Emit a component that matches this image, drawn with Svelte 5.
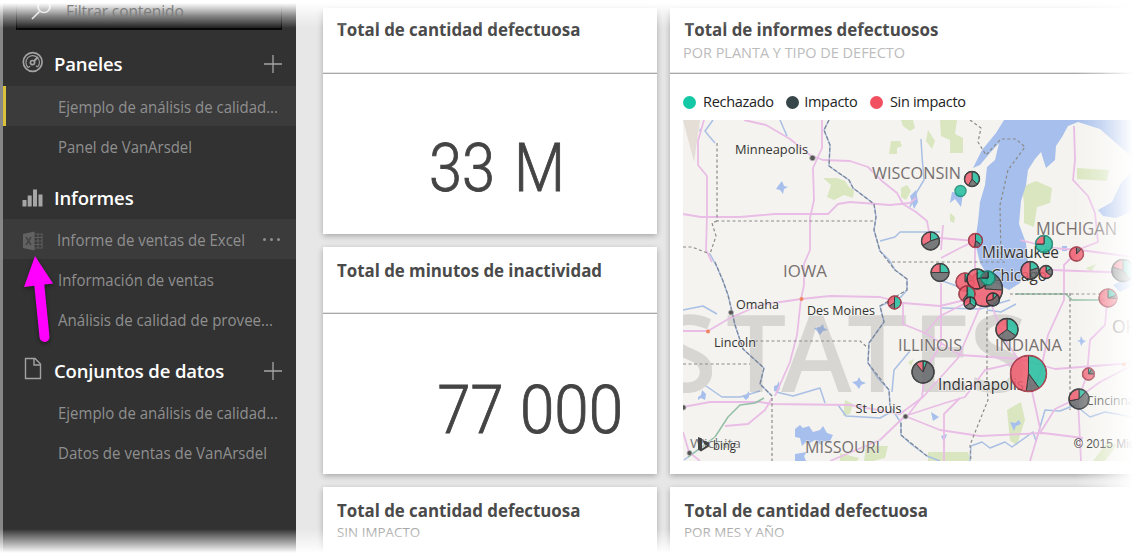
<script>
  const sections = [
    {
      title: 'Paneles', icon: 'gauge', add: true, first: true,
      items: [
        { text: 'Ejemplo de análisis de calidad...', selected: true, w: 220 },
        { text: 'Panel de VanArsdel', w: 134 }
      ]
    },
    {
      title: 'Informes', icon: 'bars',
      items: [
        { text: 'Informe de ventas de Excel', excel: true, w: 188 },
        { text: 'Información de ventas', w: 156 },
        { text: 'Análisis de calidad de provee...', w: 215 }
      ]
    },
    {
      title: 'Conjuntos de datos', icon: 'file', add: true,
      items: [
        { text: 'Ejemplo de análisis de calidad...', w: 220 },
        { text: 'Datos de ventas de VanArsdel', w: 209 }
      ]
    }
  ];

  const legend = [
    { text: 'Rechazado', color: '#12c8a5' },
    { text: 'Impacto', color: '#374649' },
    { text: 'Sin impacto', color: '#f15060' }
  ];

  // x, y, radius, rejected share, impact share (the rest is no impact)
  const pies = [
    [972, 179, 7.5, 0.38, 0.2], [960.5, 191, 5.5, 1, 0],
    [930.5, 241, 9, 0.2, 0.47], [975.5, 240.5, 7, 0.36, 0.16],
    [940, 272.5, 9, 0.25, 0.5], [985, 289, 17.5, 0.04, 0.22],
    [965, 282, 9, 0.1, 0.12], [977, 279, 10, 0.2, 0.25],
    [988, 278, 7, 0.75, 0.25], [967, 294, 8, 0.5, 0.1],
    [970, 303, 6, 0.35, 0.3], [993, 299.5, 6.5, 0.12, 0.6],
    [1007, 329.5, 11, 0.35, 0.3], [1028.5, 373.5, 18, 0.4, 0.12],
    [923, 372, 11, 0.06, 0.83], [894.5, 302.5, 6.5, 0.5, 0.15],
    [1044, 244, 8.5, 0.75, 0], [1030, 270.5, 9, 0.2, 0.3],
    [1046, 272, 6.5, 0.15, 0.2], [1076.5, 254, 7, 0, 0.12],
    [1123, 270.5, 11, 0.4, 0.4], [1108, 298, 9, 0.2, 0.06],
    [1088.5, 374, 6, 0.1, 0.15], [1079, 399, 10, 0.12, 0.6]
  ];

  const colors = ['#27bfa0', '#66696b', '#f05f70'];

  function slices([x, y, r, a, b]) {
    const shares = [a, b, Math.max(0, 1 - a - b)];
    let t = 0;
    return shares.map((s, i) => {
      const t0 = t * 2 * Math.PI;
      t += s;
      const e = t * 2 * Math.PI;
      const p = (k) => `${x + r * Math.sin(k)} ${y - r * Math.cos(k)}`;
      return { s, color: colors[i], d: `M${x} ${y}L${p(t0)}A${r} ${r} 0 ${s > 0.5 ? 1 : 0} 1 ${p(e)}Z` };
    }).filter((o) => o.s > 0 && o.s < 1);
  }

  const roads = [
    'M704 120L698 141V165L707 176V215L706 250L712 262',
    'M683 214L701 217H740L775 214L828 214L838 204L850 202L890 205L910 203L916 198',
    'M822 120V148L813 168L814 200L810 218L810 250L804 264L804 285L801 299L797 335L790 362L775 396',
    'M744 120L766 125L790 139L810 155L823 160L850 161L868 167L882 181L897 193L903 204L916 212L927 221L930 237L952 239L976 241',
    'M683 331H708L730 318L760 305L801 299L830 296L880 297L903 303L940 306L965 300L985 294',
    'M683 407L710 402H760L772 404L850 405L900 414L923 397L958 358L983 300',
    'M725 426L748 424L765 410L772 398', 'M683 432L689 452L700 461',
    'M830 461L880 440L905 416L945 403L965 397L985 370L1028 360',
    'M905 416L940 430L980 436L1043 433L1083 438', 'M903 303V324L925 333L960 355L1020 359L1055 369L1133 363',
    'M925 333L940 316L980 296', 'M941 250L943 225', 'M941 258L960 248L975 241V280',
    'M941 283V345L925 370L922 397L908 415', 'M988 296L1005 340L1028 373L1040 428L1030 461',
    'M1074 126L1075 160L1073 180L1088 196L1095 213L1098 242L1080 249L1064 265V300L1048 335L1040 375L1033 387',
    'M1020 240L1052 248L1080 250L1133 257', 'M1052 270L1133 273', 'M1108 292L1105 325L1090 340L1087 375L1078 400L1081 461',
    'M1040 433L1055 409L1078 398L1100 382L1133 365', 'M944 461V414L960 398'
  ];

  const rivers = [
    'M713 120L705 131L709 136L715 143', 'M829 120L824 130L830 145L829 166L840 174L849 180L853 188L865 197L874 204L876 217L874 230L880 251L889 260L895 270L907 279V290L901 297L880 306L884 322L869 343L868 363L878 378L889 390L890 406L901 423L901 435L911 444L927 456L940 461',
    'M710 254L717 267L723 281L728 295L731 307L735 325L743 349L764 368L760 384L772 396',
    'M880 241L895 237L900 232L940 232', 'M683 310L703 306L717 314', 'M706 386L722 397H740L760 391',
    'M776 392L793 396L820 388L825 403', 'M838 405L846 416L880 418L891 412', 'M910 351L894 370L892 392',
    'M921 139L922 156L924 180L915 195L910 207', 'M970 461L971 446L982 442L990 448L1005 442L1012 447L1033 432L1036 441L1045 410L1060 411L1075 405L1090 417L1105 412L1133 417',
    'M780 120L787 136', 'M987 310L1001 312L1016 304', 'M942 308L980 309L1010 300', 'M940 280L965 289', 'M684 460L712 440'
  ];

  const dashes = [
    'M717 143V221H875', 'M717 221L712 223L716 236L710 254', 'M683 247H692L710 254',
    'M683 364H750', 'M755 341H860L868 348', 'M772 398V461', 'M892 262H1005', 'M987 300V388L988 400L970 445L971 461',
    'M1070 293V410', 'M1010 294H1100', 'M970 120L981 128L978 142L986 155L1001 139H1016L1025 147L1008 170L1000 205L1001 260'
  ];

  // text, x, y, font size, width, kind
  const labels = [
    ['Minneapolis', 735, 154, 13.5, 73, 'city'], ['Omaha', 736, 308.5, 13.5, 43, 'city'],
    ['Des Moines', 807, 315, 13.5, 68, 'city'], ['Lincoln', 714, 347, 13.5, 42, 'city'],
    ['St Louis', 855.5, 413, 13.5, 46, 'city'], ['Milwaukee', 982, 258, 16, 77, 'city'],
    ['Chicago', 991, 280.5, 16, 56, 'city'], ['Indianapolis', 938, 390, 15.5, 86, 'city'],
    ['Cincinnati', 1086, 405, 13.5, 56, 'city'], ['WISCONSIN', 872, 178.5, 17, 89, 'state'],
    ['MICHIGAN', 1036, 234.5, 17.5, 81, 'state'], ['IOWA', 783, 277, 17, 44, 'state'],
    ['ILLINOIS', 898, 351, 16.5, 64, 'state'], ['INDIANA', 995, 351, 16.5, 67, 'state'],
    ['MISSOURI', 805, 453, 16.5, 75, 'state'], ['OHIO', 1112, 333, 17.5, 45, 'state']
  ];
</script>

<main class="page">
  <aside class="sidebar">
    <div class="search">
      <svg class="lens" viewBox="0 0 24 24"><circle cx="15" cy="8.5" r="6" /><path d="M10.5 13.5L3 21" /></svg>
      <span>Filtrar contenido</span>
    </div>
    {#each sections as s}
      <section>
        <header class:first={s.first}>
          {#if s.icon === 'gauge'}
            <svg class="icon gauge" viewBox="0 0 22 24">
              <circle cx="10.7" cy="12" r="9.4" />
              <path class="thin" d="M6.200 17.500A6.800 6.800 0 1 1 15.700 17M6.200 17.500l2-1.400M15.700 17l-1.800-1.300" />
              <circle cx="10.500" cy="12.600" r="2.100" /><path class="needle" d="M11.700 11.500L16 7" />
            </svg>
          {:else if s.icon === 'bars'}
            <svg class="icon bars" viewBox="0 0 22 24"><path d="M.5 14h4v6.500h-4zM5.700 9.500h4v11h-4zM11 3.500h4v17h-4zM16.500 8.500h4v12h-4z" /></svg>
          {:else}
            <svg class="icon file" viewBox="0 0 22 24"><path d="M3.500 1.500h9.500l5.500 5.500v14.500h-15zM12 1.500v6.500h6.500" /></svg>
          {/if}
          <h2>{s.title}</h2>
          {#if s.add}<svg class="plus" viewBox="0 0 18 18"><path d="M9 0v18M0 9h18" /></svg>{/if}
        </header>
        {#each s.items as it}
          <div class="item" class:selected={it.selected} class:hover={it.excel}>
            {#if it.excel}
              <svg class="excel" viewBox="0 0 20 20">
                <path class="sheet" d="M11 3h8v14h-8M11 6.500h8M11 10h8M11 13.500h8M15 3v14" />
                <path class="book" d="M0 3L11.500 .5v19L0 17z" /><path class="mark" d="M3 6l5 8M8 6l-5 8" />
              </svg>
            {/if}
            <svg class="label" style="width:{it.w}px" height="24"><text x="0" y="19" textLength={it.w} lengthAdjust="spacingAndGlyphs">{it.text}</text></svg>
            {#if it.excel}<span class="dots"><i></i><i></i><i></i></span>{/if}
          </div>
        {/each}
      </section>
    {/each}
  </aside>

  <div class="board">
    <div class="column">
      <article class="card small one">
        <div class="head"><h3>Total de cantidad defectuosa</h3></div>
        <svg class="figure" viewBox="323 74 334 160"><text y="191"><tspan x="429" textLength="66" lengthAdjust="spacingAndGlyphs">33</tspan> <tspan x="514" textLength="51" lengthAdjust="spacingAndGlyphs">M</tspan></text></svg>
      </article>
      <article class="card small two">
        <div class="head"><h3>Total de minutos de inactividad</h3></div>
        <svg class="figure" viewBox="323 314 334 160"><text y="433"><tspan x="437.500" textLength="66" lengthAdjust="spacingAndGlyphs">77</tspan> <tspan x="520" textLength="103" lengthAdjust="spacingAndGlyphs">000</tspan></text></svg>
      </article>
      <article class="card last"><div class="head"><h3>Total de cantidad defectuosa</h3><p class="lite">SIN IMPACTO</p></div></article>
    </div>
    <div class="column wide">
      <article class="card tall">
        <div class="head"><h3>Total de informes defectuosos</h3><p>POR PLANTA Y TIPO DE DEFECTO</p></div>
        <div class="legend">
          {#each legend as l}<span><i style="background:{l.color}"></i>{l.text}</span>{/each}
        </div>
        <svg class="map" viewBox="683 120 450 341">
          <defs><filter id="soft"><feGaussianBlur stdDeviation=".4" /></filter></defs>
          <rect x="683" y="120" width="450" height="341" fill="#f4f3ef" />
          <g filter="url(#soft)">
            <g class="forest">
              <path d="M901 120h12l2 8-5 3-7-5zM891 141h9l2 5-5 2v6h-8zM823 178h14l8 3 4 6 5 3-1 8-9-3-10 5-7-3 4-12zM901 188l6-3 4 6-5 9-5-3zM940 120h17l-2 14 8 4v15h-13v-13l-9-4zM928 130l7 11-3 8-6-8zM950 213l5 4-1 6-4-2zM1022 187l14-6 16 7-2 15-13 4-3 20-10-4v-20zM1077 168l32 2-2 11-30-2zM845 400l8 4-3 10-7 2zM908 362l6-3-3 7zM840 453l19 5-2 3h-17zM866 446h22l-3 12-12 3h-9zM928 452h40l3 9h-43zM1007 410l14-8 4 18-8 25-7-4zM1093 461l15-20 9 4-12 16zM1086 268l10-4-5 8z" />
            </g>
            <g class="water">
              <path d="M1004 120L996 133L982 150L973 168L980 165L990 153L999 143L995 160L987 167L985 185L980 202L978 222L975 242L980 263L991 281L1009 290L1020 283L1028 263L1026 243L1019 224L1021 201L1026 185L1028 170L1035 159L1041 152L1046 168L1055 160L1056 146L1062 137L1068 126L1078 122L1100 129L1133 158V120Z" />
              <path d="M1133 170L1121 183L1112 202L1098 210L1103 216L1116 218L1133 211ZM1133 286L1120 292L1113 285L1133 275ZM952 192l11 2-2 13-6-8-5 4zM910 196l6-6 2 12-4 7zM699 130l4-4-3 6zM778 186l4-5 2 5 4 1-4 2-1 5-3-4-4-1zM795 429l5-4 3 3 6-2 4 6 7-2 3-4 4 7 6 2-4 8-5-2-3 4-6-5-5 3-4-1-4 4-2-8-5-1zM795 454l12-2-3 4 2 5h-11zM814 328l6-1 3-3 1 4 4 2-5 1-3 4-3-4zM852 382l5-1 2-4 2 4 5 2-5 2-2 4-3-4zM698 397l3-2 1-5 4 4-1 6-4-2-3 2zM742 396l4-1 3-4v6l-3 3zM774 386l3-1 2-4 1 7-2 4-4-1zM1010 422l5 1 4-3 2 4-5 2-2 5zM931 412l8 5-6 4zM1077 341l3-1 1-4 2 4 3 1-3 2-2 3-1-4zM941 436l6-2-3 8zM1062 246h5v5h-5z" />
            </g>
            <path class="town" d="M683 120h17l-6 42z" />
            <g class="rivers">{#each rivers as d}<path {d} />{/each}</g>
            <g class="ghost">
              <text y="392" x="658 726 781 847 912 969">STATES</text>
            </g>
            <g class="roads">{#each roads as d}<path {d} />{/each}</g>
            <path class="toll" d="M688 457L715 437L728 417L740 405L755 403L764 398M1015 294H1066L1072 300H1105" />
            <g class="dashes">{#each dashes as d}<path {d} />{/each}</g>
            <path class="border" d="M829 120L824 130L830 145L829 166L849 180L853 188L874 204L876 217L874 230L880 251L895 270L907 279V290L880 306L884 322L869 343L868 363L889 390L890 406M901 423V435L927 456M715 262L723 281L728 295L735 325L743 349L764 368L760 384L772 396" />
          </g>
          <g class="hub"><circle cx="812.500" cy="158" r="2.800" /><circle cx="731" cy="312.500" r="2.500" /><circle cx="905.500" cy="416.500" r="2.500" /><circle cx="689.500" cy="453" r="2.500" /><circle cx="683.500" cy="407.500" r="2.500" /></g>
          <g class="spot"><circle cx="708" cy="331.500" r="2" /><circle cx="801.500" cy="299" r="2" /><circle cx="1124" cy="364.500" r="2" /></g>
          {#each labels as [t, x, y, size, w, kind]}
            <text class={kind} {x} {y} font-size={size} textLength={w} lengthAdjust="spacingAndGlyphs">{t}</text>
          {/each}
          <text class="city faint" x="690" y="448" font-size="13.500" textLength="51" lengthAdjust="spacingAndGlyphs">Wichita</text>
          <path class="bing" d="M698 437l4 1.500v10l5-3-3-1.500-1.500-4 6.500 2.500v4l-8 5-3-2z" />
          <text class="city" x="713" y="450" font-size="12.500" textLength="23" lengthAdjust="spacingAndGlyphs">bing</text>
          <text class="copy" x="1074" y="448" font-size="12">© 2015 Microsoft</text>
          {#each pies as p}
            <g class="pie">
              {#if p[3] === 1}<circle cx={p[0]} cy={p[1]} r={p[2]} fill={colors[0]} />{/if}
              {#each slices(p) as s}<path d={s.d} fill={s.color} />{/each}
              <circle class="rim" class:green={p[3] > 0.7} class:red={p[3] < 0.7 && p[4] < 0.2} cx={p[0]} cy={p[1]} r={p[2]} />
            </g>
          {/each}
        </svg>
      </article>
      <article class="card last"><div class="head"><h3>Total de cantidad defectuosa</h3><p class="lite">POR MES Y AÑO</p></div></article>
    </div>
  </div>

  <div class="fade top"></div>
  <div class="fade bottom"></div>
  <div class="fade right"></div>
  <svg class="pointer" viewBox="0 0 40 96"><path class="shaft" d="M17 28L22.500 83" /><path d="M13 2L31 29.500L2 33Z" /></svg>
</main>

<style>
  :global(body) { margin: 0; background: #fff; }
  .page { position: relative; display: flex; width: 1137px; height: 556px; overflow: hidden; background: #e7e7e7; font-family: 'Open Sans', 'Noto Sans', sans-serif; }
  .sidebar { box-sizing: border-box; flex: none; width: 296px; border-left: 3px solid #878787; background: #323232; color: #8f8f8f; }
  .search { display: flex; align-items: center; box-sizing: border-box; width: 266px; height: 30px; margin-left: 13px; padding-left: 12px; gap: 13px; border: solid #080808; border-width: 0 1px 2px; background: linear-gradient(#323232 12px, #202020); font-size: 15.500px; color: #7e7e7e; }
  .search span { position: relative; z-index: 2; padding-bottom: 6px; letter-spacing: -0.1px; }
  .lens { width: 24px; height: 24px; margin-top: -9px; fill: none; stroke: #d5d5d5; stroke-width: 1.7; }
  header { display: flex; align-items: center; box-sizing: border-box; height: 53px; padding: 11px 14px 0 19px; }
  header.first { height: 56px; }
  h2 { flex: 1; margin: 0; font-size: 18.500px; line-height: 24px; font-weight: 600; letter-spacing: -0.15px; color: #fff; }
  .icon { width: 22px; height: 24px; margin: -4px 10px 0 0; fill: none; stroke: #a2a2a2; stroke-width: 1.4; }
  .gauge { stroke-width: 1.7; }
  .gauge .thin { stroke-width: 1.1; }
  .gauge .needle { stroke-width: 2; }
  .bars { margin-top: 0; fill: #a5a5a5; stroke: none; }
  .plus { width: 18px; height: 18px; stroke: #a5a5a5; stroke-width: 1.3; }
  .item { display: flex; align-items: center; box-sizing: border-box; height: 40px; padding-left: 55px; font-size: 15.500px; }
  .item.selected { background: #3b3b3c; border-left: 3px solid #d9c03d; padding-left: 52px; }
  .item.hover { padding-left: 20px; background: #3b3b3c; }
  .label { flex: none; overflow: visible; }
  .label text { fill: #8f8f8f; }
  .excel { width: 20px; height: 20px; margin: 3px 14px 0 0; }
  .sheet { fill: none; stroke: #5c5c5c; stroke-width: 1.2; }
  .book { fill: #626262; }
  .mark { stroke: #444; stroke-width: 1.6; }
  .dots { display: flex; gap: 4px; margin: 1px 0 0 18px; }
  .dots i { width: 3px; height: 3px; border-radius: 50%; background: #8f8f8f; }
  .board { display: flex; gap: 13px; padding: 8px 0 0 27px; }
  .column { display: flex; flex-direction: column; gap: 13px; width: 334px; }
  .column.wide { width: 490px; }
  .card { flex: none; background: #fff; box-shadow: 0 2px 6px rgba(0, 0, 0, 0.28); }
  .small.one { height: 226px; }
  .small.two { height: 227px; }
  .tall { height: 466px; }
  .last { height: 90px; }
  .head { box-sizing: border-box; height: 66px; padding: 10px 14px 0; border-bottom: 1px solid #a9a9a9; box-shadow: inset 0 -1px #e2e2e2; }
  .two .head { height: 67px; padding-top: 12px; }
  .last .head { padding-top: 12px; border: 0; box-shadow: none; }
  h3 { margin: 0; font-size: 16.900px; line-height: 24px; font-weight: 700; letter-spacing: -0.03px; color: #4a4a4a; white-space: nowrap; }
  .wide h3 { padding-left: 0.5px; }
  .head p { margin: 0 0 0 -1px; font-size: 14.500px; line-height: 21px; letter-spacing: -0.02px; color: #bcbcbc; }
  .head p.lite { margin-left: 0; font-size: 13.400px; line-height: 18px; letter-spacing: 0; color: #a8a8a8; }
  .figure { display: block; width: 334px; height: 160px; }
  .figure text { font: 300 66px Roboto, sans-serif; fill: #444; stroke: #444; stroke-width: 0.9; }
  .legend { display: flex; gap: 12.500px; height: 46px; padding: 7px 0 0 13px; box-sizing: border-box; font-size: 14.500px; line-height: 46px; letter-spacing: -0.3px; color: #222; }
  .legend span { display: flex; align-items: center; gap: 7px; height: 42px; }
  .legend span:nth-child(2) { gap: 5px; }
  .legend i { width: 13px; height: 13px; border-radius: 50%; }
  .map { display: block; width: 450px; height: 341px; margin-left: 13px; }
  .forest { fill: #d9e6bf; }
  .water { fill: #a7bfec; }
  .town { fill: #e5ded7; }
  .rivers, .roads, .toll, .dashes, .border { fill: none; stroke-linejoin: round; }
  .rivers { stroke: #a9bfe4; stroke-width: 1.5; }
  .roads { stroke: #e9bde6; stroke-width: 1.8; }
  .toll { stroke: #93bfa6; stroke-width: 1.5; }
  .dashes { stroke: #8b8b87; stroke-width: 1.2; stroke-dasharray: 3 2.500; }
  .border { stroke: #7d8491; stroke-width: 1.2; stroke-dasharray: 4 2; }
  .ghost text { font: 600 107px 'Open Sans', sans-serif; fill: #777; fill-opacity: 0.23; }
  .hub { fill: #555; stroke: #bbb; stroke-width: 0.8; }
  .spot { fill: #ef855f; }
  .city { font-weight: 500; fill: #333; stroke: #f4f3ef; stroke-width: 2px; paint-order: stroke; stroke-opacity: 0.6; }
  .state { font-weight: 500; fill: #77706f; stroke: #f4f3ef; stroke-width: 1.500px; paint-order: stroke; stroke-opacity: 0.5; }
  .faint { fill: #777; }
  .bing { fill: #444; }
  .copy { font-family: 'Liberation Sans', sans-serif; fill: #222; }
  .pie { opacity: 0.87; }
  .pie path { stroke: #222; stroke-width: 1; }
  .rim { fill: none; stroke: #292c2e; stroke-width: 1.4; }
  .rim.green { stroke: #168d77; }
  .rim.red { stroke: #a52e3e; }
  .fade { position: absolute; pointer-events: none; }
  .fade.top { inset: 0 0 auto; height: 28px; background: linear-gradient(#fff 3px, rgba(255, 255, 255, 0.78) 8px, rgba(255, 255, 255, 0.42) 16px, rgba(255, 255, 255, 0)); }
  .fade.bottom { inset: auto 0 0; height: 27px; background: linear-gradient(rgba(255, 255, 255, 0), rgba(255, 255, 255, 0.5) 12px, #fff 24px); }
  .fade.right { inset: 0 0 0 auto; width: 62px; background: linear-gradient(90deg, rgba(255, 255, 255, 0), rgba(255, 255, 255, 0.35) 25px, #fff 58px); }
  .pointer { position: absolute; left: 22px; top: 254px; width: 40px; height: 96px; fill: #f0f; filter: drop-shadow(0 2px 2px rgba(0, 0, 0, 0.4)); }
  .shaft { stroke: #f0f; stroke-width: 10; stroke-linecap: round; }
</style>
